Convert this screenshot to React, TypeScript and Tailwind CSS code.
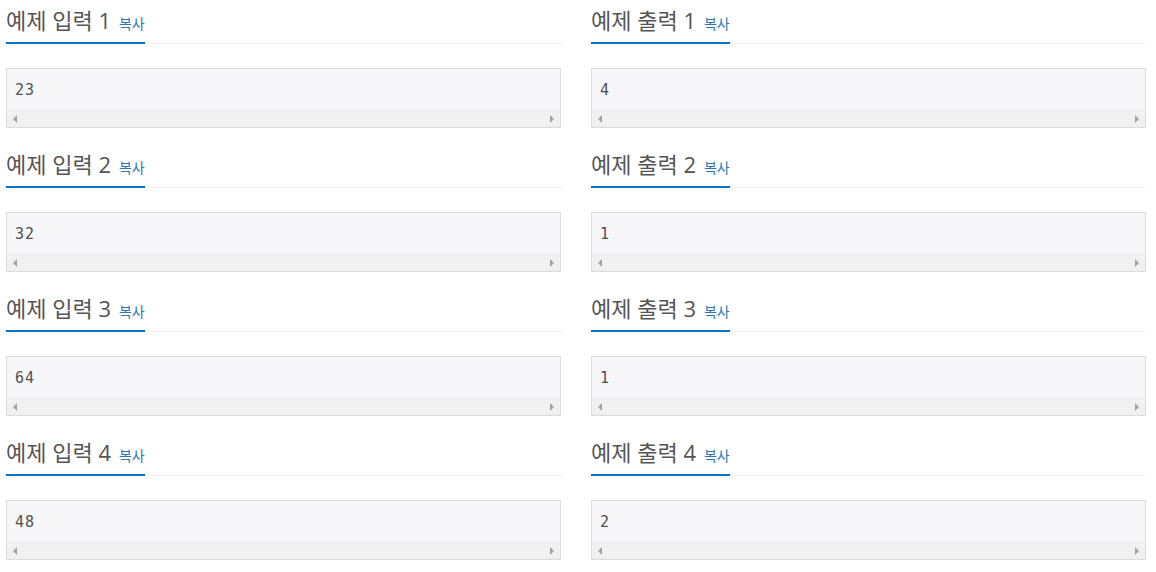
const samples = [
  { n: 1, input: "23", output: "4" },
  { n: 2, input: "32", output: "1" },
  { n: 3, input: "64", output: "1" },
  { n: 4, input: "48", output: "2" },
];

const SampleHead = ({ label }: { label: string }) => (
  <div className="h-[44px] border-b border-dotted border-[#e6e6e6]">
    <h2 className="flex w-fit h-[44px] items-baseline pt-[5px] pb-[7px] border-b-2 border-[#0076c0] text-[22px] leading-[30px] text-[#555] font-normal overflow-hidden">
      {label}
      <a className="ml-[8px] text-[14px] leading-[30px] text-[#2f77b3] cursor-pointer">복사</a>
    </h2>
  </div>
);

const SampleBox = ({ value }: { value: string }) => (
  <div className="mt-[24px] border border-[#dcdcdc] bg-[#f7f7f9]">
    <div className="h-[41px] flex items-center px-[8px] pt-[2px] font-['DejaVu_Sans_Mono',monospace] text-[15px] tracking-[1px] text-[#505050]">
      {value}
    </div>
    <div className="h-[17px] bg-[#f1f1f1] flex items-center justify-between px-[6px]">
      <div className="w-0 h-0 border-y-[4px] border-y-transparent border-r-[4px] border-r-[#a3a3a3]" />
      <div className="w-0 h-0 border-y-[4px] border-y-transparent border-l-[4px] border-l-[#a3a3a3]" />
    </div>
  </div>
);

export default function App() {
  return (
    <div className="bg-white w-[1156px] h-[572px] pl-[6px] pr-[10px] font-['Open_Sans','Noto_Sans_CJK_KR',sans-serif]">
      {samples.map((s) => (
        <div key={s.n} className="grid grid-cols-2 gap-[30px] mb-[16px]">
          <div>
            <SampleHead label={`예제 입력 ${s.n}`} />
            <SampleBox value={s.input} />
          </div>
          <div>
            <SampleHead label={`예제 출력 ${s.n}`} />
            <SampleBox value={s.output} />
          </div>
        </div>
      ))}
    </div>
  );
}
